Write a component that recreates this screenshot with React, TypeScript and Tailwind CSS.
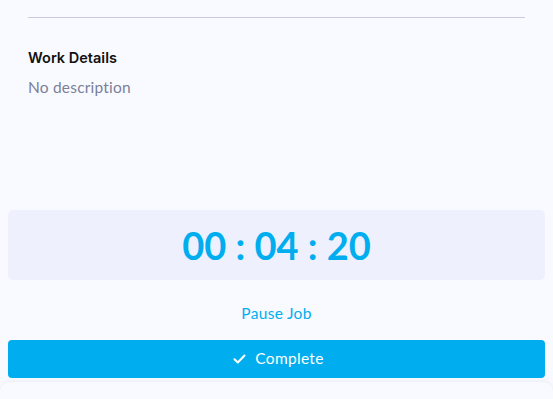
import React from "react";

export default function App() {
  return (
    <div className="w-[553px] h-[399px] overflow-hidden bg-[#f9faff] flex flex-col" style={{ fontFamily: "Lato, 'Noto Sans', sans-serif" }}>
      <div className="px-[28px] pt-[17px]">
        <div className="h-px bg-[#c9cbe3]" />
        <div className="mt-[30px] text-[14.5px] font-semibold text-[#111] leading-[20px]" style={{ fontFamily: "Inter, sans-serif" }}>Work Details</div>
        <div className="mt-[9px] text-[15.5px] text-[#7b7f98] leading-[20px] tracking-[0.2px]">No description</div>
      </div>
      <div className="px-[8px] mt-[113px]">
        <div className="h-[70px] rounded-[5px] bg-[#eef1fd] flex items-center justify-center">
          <span className="text-[38px] font-bold text-[#00aeef] leading-none" style={{ fontFamily: "Lato, sans-serif" }}>00 : 04 : 20</span>
        </div>
      </div>
      <div className="mt-[25px] h-[18px] flex items-center justify-center text-[15.5px] text-[#00aeef] tracking-[0.3px]">Pause Job</div>
      <div className="px-[8px] mt-[17px]">
        <div className="h-[38px] rounded-[4px] bg-[#00aeef] flex items-center justify-center gap-[9px] text-white text-[15.5px] tracking-[0.3px]">
          <svg width="13" height="10" viewBox="0 0 13 10" fill="none" stroke="white" strokeWidth="2" strokeLinecap="round" strokeLinejoin="round" className="ml-[4px]">
            <path d="M1.5 5.2 L4.8 8.5 L11.5 1.5" />
          </svg>
          <span>Complete</span>
        </div>
      </div>
      <div className="mt-[4px] flex-1 rounded-t-[10px] bg-[#f9faff] shadow-[0_-1px_4px_rgba(0,0,0,0.06)]" />
    </div>
  );
}
